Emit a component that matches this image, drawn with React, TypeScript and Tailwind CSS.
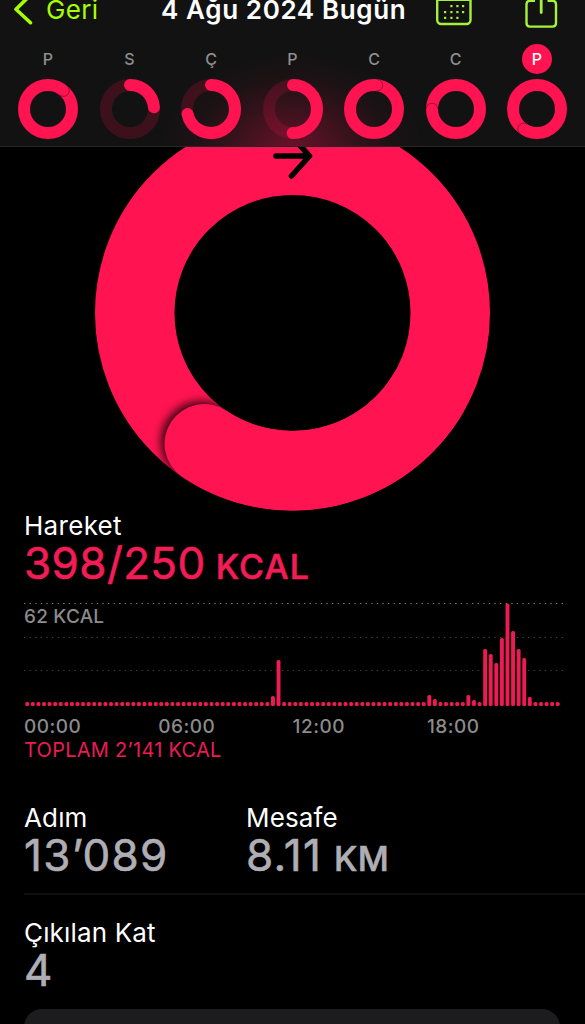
import clsx from 'clsx'

const PINK = '#ff1350'

interface Day {
  id: number
  label: string
  turn: number
  full?: boolean
  selected?: boolean
}

const days: Day[] = [
  { id: 1, label: 'P', turn: 40, full: true },
  { id: 2, label: 'S', turn: 86 },
  { id: 3, label: 'Ç', turn: 258 },
  { id: 4, label: 'P', turn: 181 },
  { id: 5, label: 'C', turn: 7, full: true },
  { id: 6, label: 'C', turn: 270, full: true },
  { id: 7, label: 'P', turn: 214, full: true, selected: true },
]

// Quarter-hour slots with more than the resting value, heights in px
const activeSlots: Record<number, number> = {
  44: 10,
  45: 46,
  72: 11,
  73: 7,
  79: 11,
  80: 6,
  82: 57,
  83: 52,
  84: 43,
  85: 68,
  86: 102.5,
  87: 75,
  88: 57,
  89: 48,
  90: 9,
}

const hours = ['00:00', '06:00', '12:00', '18:00']

const point = (cx: number, cy: number, r: number, deg: number) => {
  const a = (deg * Math.PI) / 180
  return { x: cx + r * Math.sin(a), y: cy - r * Math.cos(a) }
}

const arc = (cx: number, cy: number, r: number, from: number, to: number) => {
  const s = point(cx, cy, r, from)
  const e = point(cx, cy, r, to)
  return `M${s.x} ${s.y}A${r} ${r} 0 ${to - from > 180 ? 1 : 0} 1 ${e.x} ${e.y}`
}

const SmallRing = ({ day }: { day: Day }) => {
  const end = point(30, 30, 24, day.turn)

  return (
    <svg width="60" height="60" viewBox="0 0 60 60" fill="none">
      <circle
        cx="30"
        cy="30"
        r="24"
        stroke={PINK}
        strokeWidth="12"
        strokeOpacity={day.full ? 1 : 0.18}
      />
      {day.full ? (
        <path
          d="M0 -5.8A5.8 5.8 0 0 1 0 5.8"
          transform={`translate(${end.x} ${end.y}) rotate(${day.turn})`}
          stroke="#8c0c30"
          strokeWidth="0.8"
        />
      ) : (
        <path
          d={arc(30, 30, 24, 0, day.turn)}
          stroke={PINK}
          strokeWidth="12"
          strokeLinecap="round"
        />
      )}
    </svg>
  )
}

const Header = () => (
  <header className="relative h-[147px] overflow-hidden border-b border-[#272727] bg-[#121212]">
    <svg className="absolute inset-0" width="585" height="147">
      <defs>
        <radialGradient id="glow">
          <stop offset="0" stopColor={PINK} stopOpacity="0.38" />
          <stop offset="0.45" stopColor={PINK} stopOpacity="0.16" />
          <stop offset="0.75" stopColor={PINK} stopOpacity="0.04" />
          <stop offset="1" stopColor={PINK} stopOpacity="0" />
        </radialGradient>
      </defs>
      <ellipse cx="292" cy="152" rx="135" ry="100" fill="url(#glow)" />
    </svg>
    <div className="relative flex h-[30px] items-start">
      <svg className="ml-3 shrink-0" width="24" height="30" fill="none">
        <path
          d="M18.5 -5L4 9.3L18.5 22.7"
          stroke="#a6ff00"
          strokeWidth="3.6"
          strokeLinecap="round"
          strokeLinejoin="round"
        />
      </svg>
      <span className="ml-2.5 w-[115px] text-[26px] leading-[20px] tracking-[0.3px] text-[#a6ff00]">
        Geri
      </span>
      <h1 className="w-[274px] text-[26px] leading-[20px] font-semibold tracking-[0.62px] whitespace-nowrap text-white">
        4 Ağu 2024 Bugün
      </h1>
      <svg width="38" height="30" fill="none">
        <rect x="2.2" y="-7" width="33.3" height="31" rx="4" stroke="#a6f03a" strokeWidth="2.4" />
        <path d="M2 0.3H36" stroke="#a6f03a" strokeWidth="1.6" />
        <g fill="#a6f03a">
          {[15.3, 21.3, 27].map((x) => (
            <rect key={x} x={x} y="5" width="2.2" height="2.2" />
          ))}
          {[9, 15.3, 21.3, 27].map((x) => (
            <rect key={x} x={x} y="11" width="2.2" height="2.2" />
          ))}
          {[9, 15.3, 21.3].map((x) => (
            <rect key={x} x={x} y="16.8" width="2.2" height="2.2" />
          ))}
        </g>
      </svg>
      <svg className="ml-[50px]" width="36" height="30" fill="none" stroke="#a6f03a">
        <path
          d="M12 0.8H7Q3.5 0.8 3.5 4.3V23.1Q3.5 26.6 7 26.6H29.5Q33 26.6 33 23.1V4.3Q33 0.8 29.5 0.8H24.5"
          strokeWidth="2.4"
        />
        <path d="M18.2 -5V12.5" strokeWidth="2.8" strokeLinecap="round" />
      </svg>
    </div>
    <div className="relative flex gap-[21.5px] pt-3.5 pl-[18px]">
      {days.map((day) => (
        <div key={day.id} className="flex w-[60px] shrink-0 flex-col items-center">
          <div
            className={clsx(
              'flex size-[30px] items-center justify-center rounded-full text-base font-medium',
              day.selected ? 'bg-[#ff1350] text-white' : 'text-[#8e8e8f]'
            )}
          >
            {day.label}
          </div>
          <div className="mt-[5px] h-[60px]">
            <SmallRing day={day} />
          </div>
        </div>
      ))}
    </div>
  </header>
)

const MoveRing = () => {
  const tip = point(292.5, 313, 157.75, 214)

  return (
    <svg className="block" width="585" height="364" viewBox="0 147 585 364" fill="none">
      <defs>
        <clipPath id="band">
          <path
            clipRule="evenodd"
            d="M95 313a197.5 197.5 0 1 0 395 0a197.5 197.5 0 1 0 -395 0ZM174.5 313a118 118 0 1 0 236 0a118 118 0 1 0 -236 0Z"
          />
        </clipPath>
        <filter id="soft" x="-30%" y="-30%" width="160%" height="160%">
          <feGaussianBlur stdDeviation="5" />
        </filter>
      </defs>
      <circle cx="292.5" cy="313" r="157.75" stroke={PINK} strokeWidth="79.5" />
      <g clipPath="url(#band)">
        <circle
          cx={tip.x - 3}
          cy={tip.y - 2}
          r="40"
          fill="#000"
          fillOpacity="0.85"
          filter="url(#soft)"
        />
      </g>
      <path
        d={arc(292.5, 313, 157.75, 120, 214)}
        stroke={PINK}
        strokeWidth="79.5"
        strokeLinecap="round"
      />
      <path
        d="M276 156H309.5M291.5 136L309.5 156L291.5 176"
        stroke="#000"
        strokeWidth="5.6"
        strokeLinecap="round"
        strokeLinejoin="round"
      />
    </svg>
  )
}

const MoveChart = () => (
  <div className="relative mt-[18px]">
    <svg className="block" width="539" height="104" fill="none">
      {[0.5, 34.5, 67.5].map((y, i) => (
        <path
          key={y}
          d={`M0 ${y}H539`}
          stroke={i === 0 ? '#777' : '#3d3d3d'}
          strokeDasharray="1.4 4.2"
        />
      ))}
      {Array.from({ length: 96 }, (_, i) => {
        const height = activeSlots[i] ?? 4
        return (
          <rect
            key={i}
            x={1.3 + i * 5.584}
            y={103 - height}
            width="3.9"
            height={height}
            rx="1.6"
            fill="#ec1b54"
          />
        )
      })}
    </svg>
    <span className="absolute top-1 left-0 text-[19px] leading-[20px] font-medium tracking-[0.2px] text-[#8b8b8c]">
      62 KCAL
    </span>
  </div>
)

interface StatProps {
  label: string
  value: string
  unit?: string
}

const Stat = ({ label, value, unit }: StatProps) => (
  <div className="w-[222px] whitespace-nowrap">
    <h3 className="text-[26px] leading-[30px] tracking-[0.15px] text-white">{label}</h3>
    <p className="text-[44px] leading-[44px] tracking-[1.3px] text-[#aeaeb4] [-webkit-text-stroke:0.6px_#aeaeb4]">
      {value}
      {unit && (
        <span className="ml-3 text-[34px] leading-none font-medium tracking-[0.3px]">{unit}</span>
      )}
    </p>
  </div>
)

const App = () => {
  return (
    <div className="h-[1024px] w-[585px] overflow-hidden bg-black font-['Inter',sans-serif]">
      <Header />
      <MoveRing />
      <main className="pl-6">
        <h2 className="text-[26px] leading-[30px] tracking-[0.3px] text-white">Hareket</h2>
        <p className="text-[44px] leading-[44px] tracking-[0.4px] whitespace-nowrap text-[#f31c57] [-webkit-text-stroke:0.6px_#f31c57]">
          398/250
          <span className="ml-2.5 text-[34px] leading-none font-medium tracking-[1.2px]">KCAL</span>
        </p>
        <MoveChart />
        <div className="mt-2.5 flex text-[19px] leading-[20px] font-medium tracking-[0.5px] text-[#8b8b8c]">
          {hours.map((hour) => (
            <span key={hour} className="w-[134.3px]">
              {hour}
            </span>
          ))}
        </div>
        <p className="mt-px text-[20px] leading-[24px] tracking-[0.27px] text-[#e91c55]">
          TOPLAM 2’141 KCAL
        </p>
        <div className="mt-[41px] flex h-[92px] border-b-2 border-[#101011]">
          <Stat label="Adım" value="13’089" />
          <Stat label="Mesafe" value="8.11" unit="KM" />
        </div>
        <div className="mt-[23px]">
          <Stat label="Çıkılan Kat" value="4" />
        </div>
        <div className="mt-[17px] h-10 w-[536px] rounded-t-[18px] bg-[#1c1c1e]" />
      </main>
    </div>
  )
}

export default App
